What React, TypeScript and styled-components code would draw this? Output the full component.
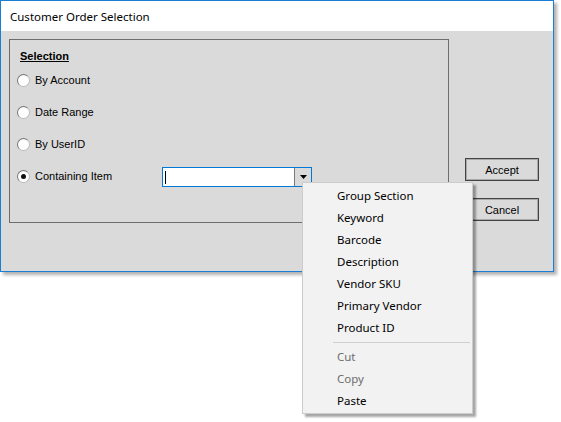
import {FC} from 'react';
import styled, {createGlobalStyle} from 'styled-components';

const GlobalStyle = createGlobalStyle`
  html, body {
    margin: 0;
    padding: 0;
    background: #ffffff;
  }
  #root {
    position: relative;
    width: 561px;
    height: 422px;
    overflow: hidden;
  }
`;

const Window = styled.div`
  width: 554px;
  height: 272px;
  box-sizing: border-box;
  border: 1px solid #1a7fd4;
  background: #dadada;
  box-shadow: 3px 3px 3px rgba(0, 0, 0, 0.3);
  display: flex;
  flex-direction: column;
`;

const TitleBar = styled.div`
  height: 30px;
  background: #ffffff;
  display: flex;
  align-items: center;
  padding-left: 9px;
  font-family: 'Noto Sans', 'Open Sans', sans-serif;
  font-size: 11.5px;
  color: #000;
`;

const Body = styled.div`
  display: flex;
  padding: 8px 0 0 8px;
  gap: 16px;
`;

const GroupBox = styled.div`
  width: 440px;
  height: 184px;
  box-sizing: border-box;
  border: 1px solid #6e6e6e;
  padding: 8px 0 0 0;
  font-family: 'Liberation Sans', Arial, sans-serif;
  font-size: 11px;
  color: #000;
`;

const GroupTitle = styled.div`
  font-weight: bold;
  text-decoration: underline;
  padding-left: 10px;
  height: 16px;
  line-height: 16px;
`;

const OptionList = styled.div`
  display: flex;
  flex-direction: column;
`;

const OptionRow = styled.div`
  display: flex;
  align-items: center;
  height: 32px;
  padding-left: 7px;
`;

const Radio = styled.span<{$checked?: boolean}>`
  width: 13px;
  height: 13px;
  box-sizing: border-box;
  border-radius: 50%;
  border: 1px solid #7a7a7a;
  border-right-color: #bcbcbc;
  border-bottom-color: #bcbcbc;
  background: radial-gradient(circle at 55% 55%, #ffffff 55%, #e8e8e8 100%);
  display: flex;
  align-items: center;
  justify-content: center;
  margin-right: 5px;
  &::after {
    content: '';
    display: ${p => (p.$checked ? 'block' : 'none')};
    width: 5px;
    height: 5px;
    border-radius: 50%;
    background: #111;
  }
`;

const OptionLabel = styled.span<{$width?: number}>`
  width: ${p => (p.$width ? `${p.$width}px` : 'auto')};
`;

const Combo = styled.div`
  width: 150px;
  height: 20px;
  box-sizing: border-box;
  border: 1px solid #0078d7;
  background: #ffffff;
  display: flex;
  margin-top: 2px;
`;

const ComboInput = styled.div`
  flex: 1;
  display: flex;
  align-items: center;
  padding-left: 2px;
`;

const Caret = styled.span`
  width: 1px;
  height: 13px;
  background: #000;
`;

const ComboButton = styled.div`
  width: 16px;
  border-left: 1px solid #7a7a7a;
  background: #dadada;
  display: flex;
  align-items: center;
  justify-content: center;
`;

const ButtonColumn = styled.div`
  display: flex;
  flex-direction: column;
  gap: 17px;
  padding-top: 119px;
`;

const DialogButton = styled.div`
  width: 74px;
  height: 23px;
  box-sizing: border-box;
  border: 1px solid #444;
  box-shadow: inset 0 0 0 1px #a9a9a9;
  background: #dadada;
  display: flex;
  align-items: center;
  justify-content: center;
  font-family: 'Liberation Sans', Arial, sans-serif;
  font-size: 11px;
  color: #000;
`;

const Menu = styled.div`
  position: absolute;
  left: 302px;
  top: 182px;
  width: 171px;
  box-sizing: border-box;
  border: 1px solid #cccccc;
  background: #f2f2f2;
  padding: 2px 0 1px 0;
  box-shadow: 3px 3px 2px rgba(0, 0, 0, 0.35);
  font-family: 'Noto Sans', 'Open Sans', sans-serif;
  font-size: 11.5px;
`;

const MenuItem = styled.div<{$disabled?: boolean}>`
  height: 22px;
  line-height: 22px;
  padding-left: 34px;
  color: ${p => (p.$disabled ? '#6d6d6d' : '#000')};
`;

const MenuSeparator = styled.div`
  height: 1px;
  background: #d0d0d0;
  margin: 3px 2px 3px 30px;
`;

const options = ['By Account', 'Date Range', 'By UserID'];
const menuItems = [
  'Group Section',
  'Keyword',
  'Barcode',
  'Description',
  'Vendor SKU',
  'Primary Vendor',
  'Product ID',
];

const App: FC = () => {
  return (
    <>
      <GlobalStyle />
      <Window>
        <TitleBar>Customer Order Selection</TitleBar>
        <Body>
          <GroupBox>
            <GroupTitle>Selection</GroupTitle>
            <OptionList>
              {options.map(o => (
                <OptionRow key={o}>
                  <Radio />
                  <OptionLabel>{o}</OptionLabel>
                </OptionRow>
              ))}
              <OptionRow>
                <Radio $checked />
                <OptionLabel $width={127}>Containing Item</OptionLabel>
                <Combo>
                  <ComboInput>
                    <Caret />
                  </ComboInput>
                  <ComboButton>
                    <svg width="7" height="4" viewBox="0 0 7 4">
                      <path d="M0 0h7L3.5 4z" fill="#000" />
                    </svg>
                  </ComboButton>
                </Combo>
              </OptionRow>
            </OptionList>
          </GroupBox>
          <ButtonColumn>
            <DialogButton>Accept</DialogButton>
            <DialogButton>Cancel</DialogButton>
          </ButtonColumn>
        </Body>
      </Window>
      <Menu>
        {menuItems.map(m => (
          <MenuItem key={m}>{m}</MenuItem>
        ))}
        <MenuSeparator />
        <MenuItem $disabled>Cut</MenuItem>
        <MenuItem $disabled>Copy</MenuItem>
        <MenuItem>Paste</MenuItem>
      </Menu>
    </>
  );
};

export default App;
